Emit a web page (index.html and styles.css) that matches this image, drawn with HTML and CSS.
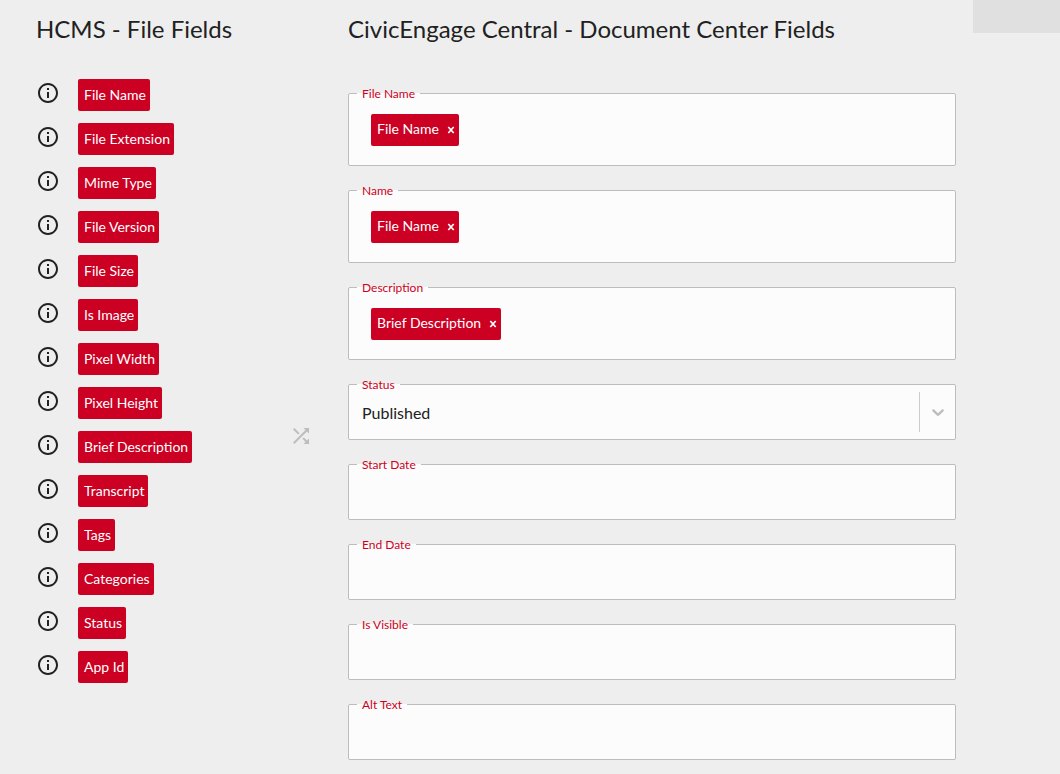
FILE: index.html
```
<!DOCTYPE html>
<html lang="en">
<head>
<meta charset="utf-8">
<meta name="viewport" content="width=device-width, initial-scale=1">
<title>Field Mapping</title>
<link rel="stylesheet" href="styles.css">
</head>
<body>
<svg class="sprite" aria-hidden="true">
  <symbol id="info" viewBox="0 0 24 24"><path d="M11 7h2v2h-2zm0 4h2v6h-2zm1-9C6.480 2 2 6.480 2 12s4.480 10 10 10 10-4.480 10-10S17.520 2 12 2zm0 18c-4.410 0-8-3.590-8-8s3.590-8 8-8 8 3.590 8 8-3.590 8-8 8z"/></symbol>
  <symbol id="shuffle" viewBox="0 0 24 24"><path d="M10.590 9.170L5.410 4 4 5.410l5.170 5.170 1.420-1.410zM14.500 4l2.040 2.040L4 18.590 5.410 20 17.960 7.460 20 9.500V4h-5.500zm.330 9.410l-1.410 1.410 3.130 3.130L14.500 20H20v-5.500l-2.040 2.040-3.130-3.130z"/></symbol>
  <symbol id="chevron" viewBox="0 0 20 20"><path d="M4.516 7.548c0.436-0.446 1.043-0.481 1.576 0l3.908 3.747 3.908-3.747c0.533-0.481 1.141-0.446 1.574 0 0.436 0.445 0.408 1.197 0 1.615-0.406 0.418-4.695 4.502-4.695 4.502-0.217 0.223-0.502 0.335-0.787 0.335s-0.570-0.112-0.789-0.335c0 0-4.287-4.084-4.695-4.502s-0.436-1.170 0-1.615z"/></symbol>
  <symbol id="cross" viewBox="0 0 8 8"><path d="M1.300 1l5.400 6M6.700 1L1.300 7" stroke="currentColor" stroke-width="1.700"/></symbol>
</svg>
<main class="mapping">
  <section class="source">
    <h1 class="title">HCMS - File Fields</h1>
    <ul class="source-list">
      <li class="source-row"><button class="info" aria-label="About File Name"><svg class="icon"><use href="#info"/></svg></button><span class="chip">File Name</span></li>
      <li class="source-row"><button class="info" aria-label="About File Extension"><svg class="icon"><use href="#info"/></svg></button><span class="chip">File Extension</span></li>
      <li class="source-row"><button class="info" aria-label="About Mime Type"><svg class="icon"><use href="#info"/></svg></button><span class="chip">Mime Type</span></li>
      <li class="source-row"><button class="info" aria-label="About File Version"><svg class="icon"><use href="#info"/></svg></button><span class="chip">File Version</span></li>
      <li class="source-row"><button class="info" aria-label="About File Size"><svg class="icon"><use href="#info"/></svg></button><span class="chip">File Size</span></li>
      <li class="source-row"><button class="info" aria-label="About Is Image"><svg class="icon"><use href="#info"/></svg></button><span class="chip">Is Image</span></li>
      <li class="source-row"><button class="info" aria-label="About Pixel Width"><svg class="icon"><use href="#info"/></svg></button><span class="chip">Pixel Width</span></li>
      <li class="source-row"><button class="info" aria-label="About Pixel Height"><svg class="icon"><use href="#info"/></svg></button><span class="chip">Pixel Height</span></li>
      <li class="source-row"><button class="info" aria-label="About Brief Description"><svg class="icon"><use href="#info"/></svg></button><span class="chip">Brief Description</span></li>
      <li class="source-row"><button class="info" aria-label="About Transcript"><svg class="icon"><use href="#info"/></svg></button><span class="chip">Transcript</span></li>
      <li class="source-row"><button class="info" aria-label="About Tags"><svg class="icon"><use href="#info"/></svg></button><span class="chip">Tags</span></li>
      <li class="source-row"><button class="info" aria-label="About Categories"><svg class="icon"><use href="#info"/></svg></button><span class="chip">Categories</span></li>
      <li class="source-row"><button class="info" aria-label="About Status"><svg class="icon"><use href="#info"/></svg></button><span class="chip">Status</span></li>
      <li class="source-row"><button class="info" aria-label="About App Id"><svg class="icon"><use href="#info"/></svg></button><span class="chip">App Id</span></li>
    </ul>
  </section>
  <div class="link"><svg class="icon"><use href="#shuffle"/></svg></div>
  <section class="target">
    <h2 class="title">CivicEngage Central - Document Center Fields</h2>
    <form class="fields">
      <div class="field" role="group" aria-labelledby="l-file">
        <span class="label" id="l-file">File Name</span>
        <div class="drop"><span class="chip">File Name<button type="button" class="remove" aria-label="Remove File Name"><svg class="cross"><use href="#cross"/></svg></button></span></div>
      </div>
      <div class="field" role="group" aria-labelledby="l-name">
        <span class="label" id="l-name">Name</span>
        <div class="drop"><span class="chip">File Name<button type="button" class="remove" aria-label="Remove File Name"><svg class="cross"><use href="#cross"/></svg></button></span></div>
      </div>
      <div class="field" role="group" aria-labelledby="l-desc">
        <span class="label" id="l-desc">Description</span>
        <div class="drop"><span class="chip">Brief Description<button type="button" class="remove" aria-label="Remove Brief Description"><svg class="cross"><use href="#cross"/></svg></button></span></div>
      </div>
      <div class="field">
        <label class="label" for="status">Status</label>
        <select class="control" id="status"><option>Published</option></select>
        <span class="arrow"><svg class="chevron"><use href="#chevron"/></svg></span>
      </div>
      <div class="field"><label class="label" for="start">Start Date</label><input class="control" id="start" type="text"></div>
      <div class="field"><label class="label" for="end">End Date</label><input class="control" id="end" type="text"></div>
      <div class="field"><label class="label" for="visible">Is Visible</label><input class="control" id="visible" type="text"></div>
      <div class="field"><label class="label" for="alt">Alt Text</label><input class="control" id="alt" type="text"></div>
    </form>
  </section>
  <div class="panel"></div>
</main>
</body>
</html>
```
FILE: styles.css
```
* { box-sizing: border-box; }

body {
  margin: 0;
  background: #eee;
  color: #212121;
  font-family: Lato, "Liberation Sans", sans-serif;
}

button { padding: 0; border: 0; background: none; color: inherit; cursor: pointer; }
svg { display: block; fill: currentColor; }

.sprite { display: none; }
.icon { width: 24px; height: 24px; }

.mapping {
  display: grid;
  grid-template-columns: 253px 24px minmax(0, 1fr) 87px;
  align-items: start;
  padding-left: 36px;
}

.title {
  margin: 0;
  padding-top: 13px;
  font-size: 24px;
  font-weight: 400;
  line-height: 32px;
  white-space: nowrap;
}

.source-list {
  display: grid;
  gap: 12px;
  margin: 0;
  padding: 34px 0 0;
  list-style: none;
}

.source-row { display: flex; align-items: flex-start; gap: 18px; }
.info { padding-top: 2px; }

.chip {
  display: inline-flex;
  align-items: center;
  height: 32px;
  padding: 0 4px 0 6px;
  border-radius: 2px;
  background: #cc0022;
  color: #fff;
  font-size: 14px;
  line-height: 20px;
  white-space: nowrap;
}

.link { padding-top: 424px; color: #bdbdbd; }

.target { padding: 0 17px 14px 35px; }

.fields { display: grid; gap: 24px; padding-top: 48px; }

.field {
  position: relative;
  border: 1px solid #bdbdbd;
  border-radius: 2px;
  background: #fcfcfc;
}

/* The one-pixel band behind the text opens the notch in the border. */
.label {
  position: absolute;
  top: -8px;
  left: 8px;
  padding: 0 5px;
  background: linear-gradient(#fcfcfc, #fcfcfc) 0 7px / 100% 1px no-repeat;
  color: #cc0022;
  font-size: 12px;
  line-height: 16px;
  white-space: nowrap;
}

.drop { display: flex; padding: 20px 22px 19px; }
.drop .chip { padding-bottom: 2px; }

.remove { margin-left: 8px; padding-top: 2px; }
.cross { width: 8px; height: 8px; }

.control {
  display: block;
  width: 100%;
  height: 54px;
  padding: 2px 13px 0;
  border: 0;
  outline: 0;
  background: transparent;
  color: inherit;
  font: 16px/24px Lato, "Liberation Sans", sans-serif;
  appearance: none;
}

.arrow {
  position: absolute;
  top: 7px;
  right: 0;
  bottom: 7px;
  display: flex;
  align-items: center;
  padding: 0 7px 0 8px;
  border-left: 1px solid #ccc;
  color: #bdbdbd;
  pointer-events: none;
}

.chevron { width: 20px; height: 20px; }

.panel { height: 33px; background: #e0e0e0; }
```
